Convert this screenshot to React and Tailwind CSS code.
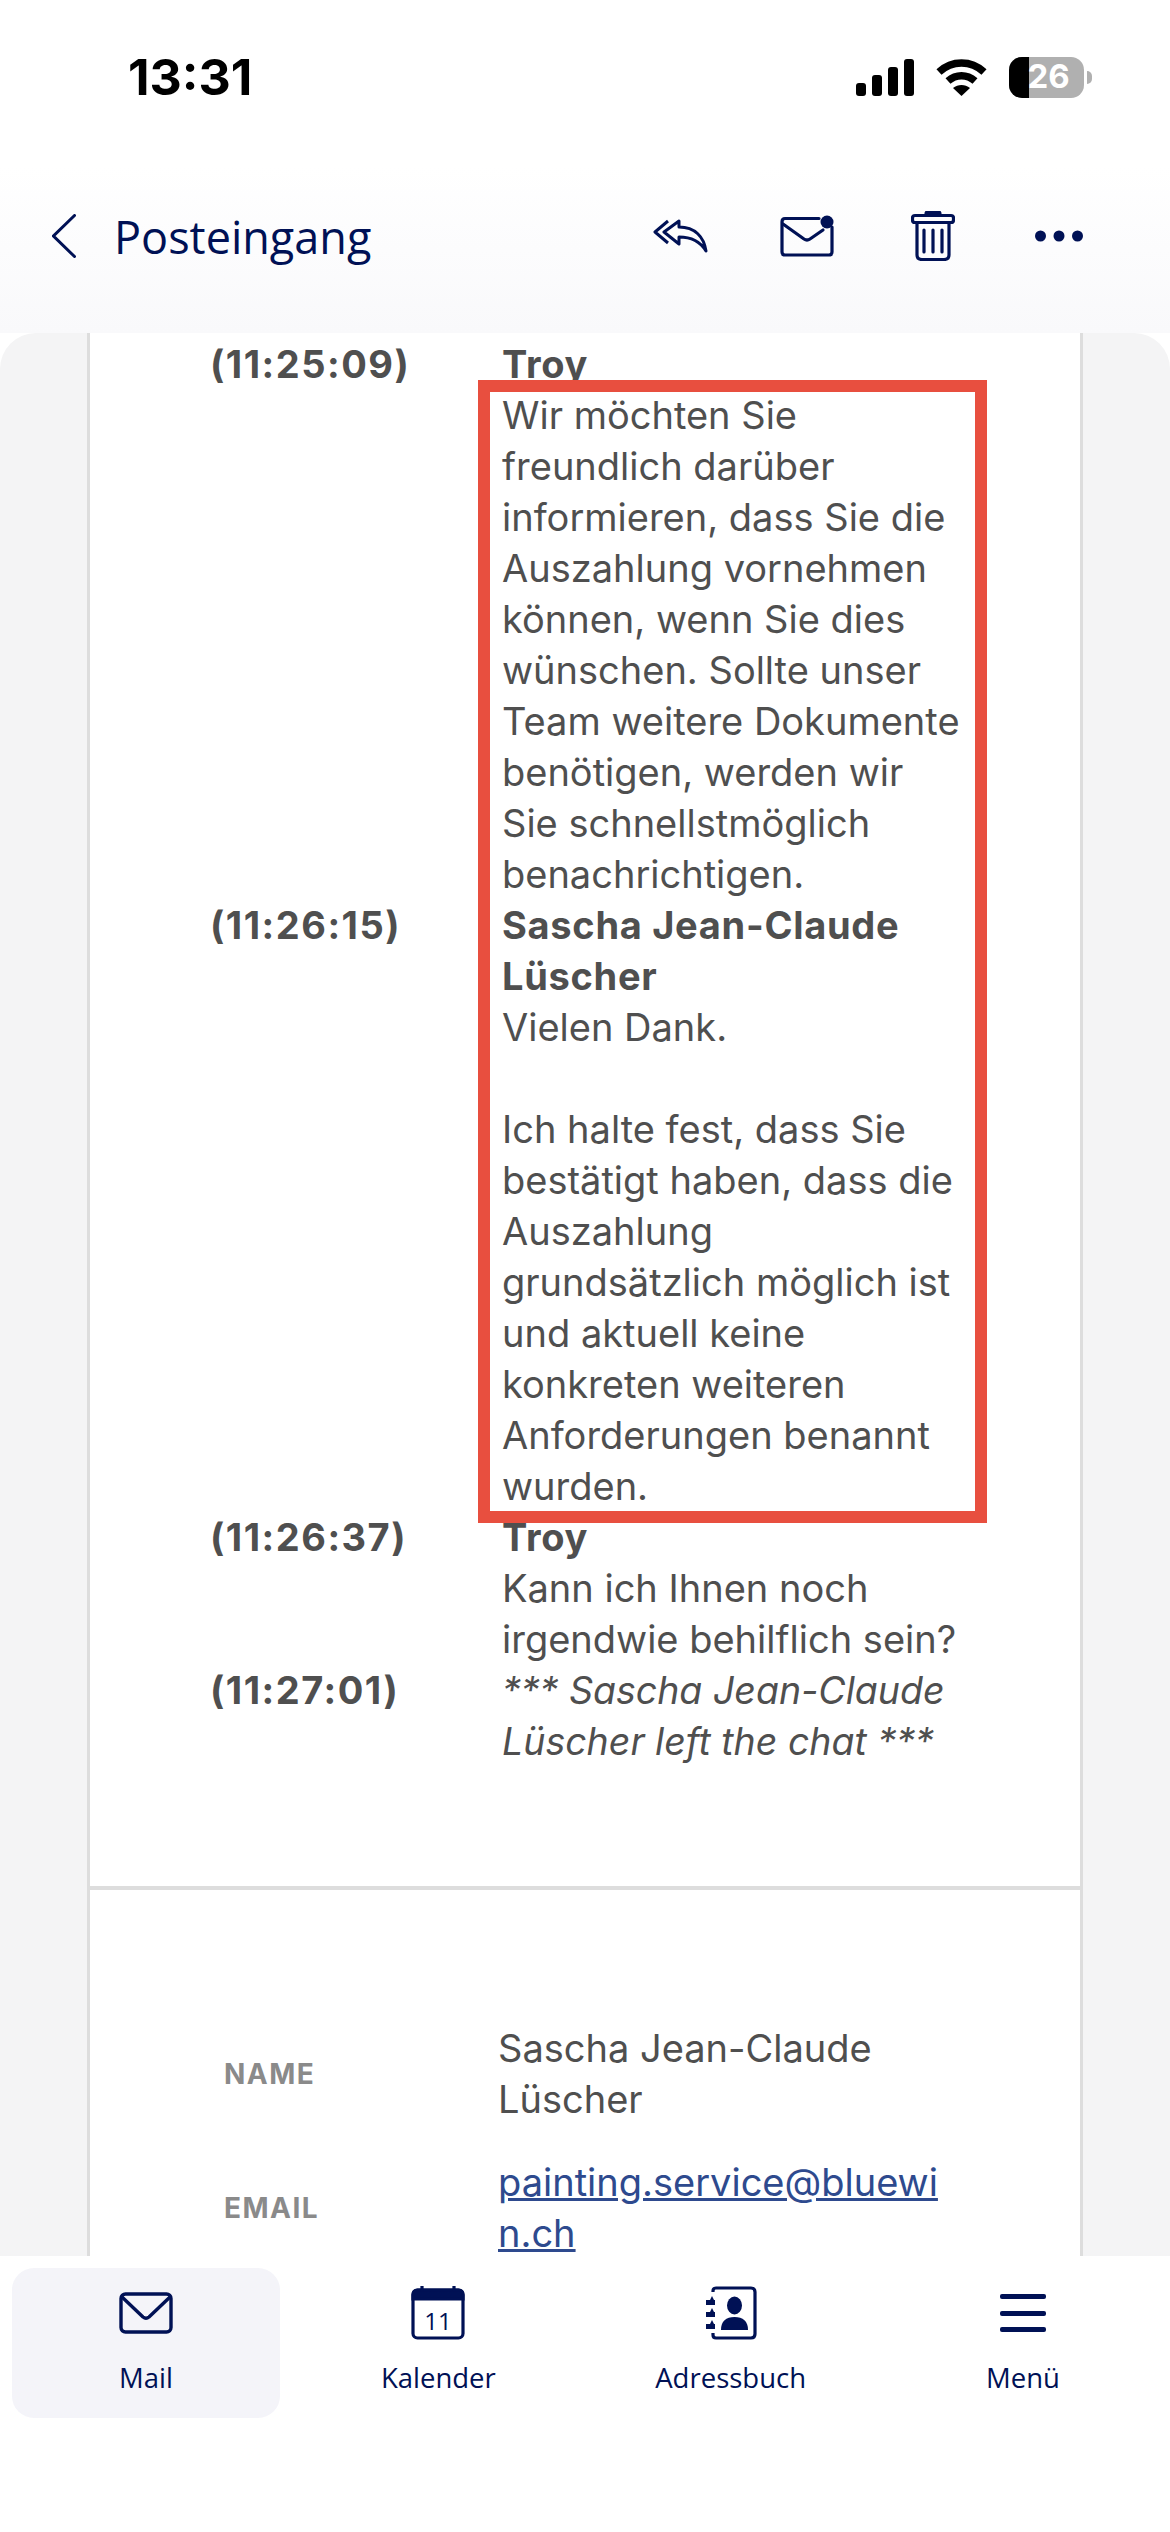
const NAVY = "#001155";

const rows = [
  { time: "(11:25:09)", name: ["Troy"], lines: ["Wir möchten Sie", "freundlich darüber", "informieren, dass Sie die", "Auszahlung vornehmen", "können, wenn Sie dies", "wünschen. Sollte unser", "Team weitere Dokumente", "benötigen, werden wir", "Sie schnellstmöglich", "benachrichtigen."] },
  { time: "(11:26:15)", name: ["Sascha Jean-Claude", "Lüscher"], lines: ["Vielen Dank.", "\u00a0", "Ich halte fest, dass Sie", "bestätigt haben, dass die", "Auszahlung", "grundsätzlich möglich ist", "und aktuell keine", "konkreten weiteren", "Anforderungen benannt", "wurden."] },
  { time: "(11:26:37)", name: ["Troy"], lines: ["Kann ich Ihnen noch", "irgendwie behilflich sein?"] },
  { time: "(11:27:01)", name: [], lines: ["*** Sascha Jean-Claude", "Lüscher left the chat ***"], italic: true },
];

function Signal() {
  return (
    <svg width="58" height="37" viewBox="0 0 58 37" fill="#000">
      <rect x="0" y="24" width="10" height="13" rx="3" />
      <rect x="16" y="16" width="10" height="21" rx="3" />
      <rect x="32" y="8" width="10" height="29" rx="3" />
      <rect x="48" y="0" width="10" height="37" rx="3" />
    </svg>
  );
}

function Wifi() {
  return (
    <svg width="51" height="37" viewBox="0 0 51 37" fill="none" stroke="#000" strokeWidth="7.5">
      <path d="M3 13 C16 1 35 1 48 13" />
      <path d="M12 22 C20 15 31 15 39 22" />
      <path d="M25.5 37 L17 29 C22 25 29 25 34 29 Z" fill="#000" stroke="none" />
    </svg>
  );
}

function Battery() {
  return (
    <div className="flex items-center">
      <div className="relative h-[41px] w-[75px] overflow-hidden rounded-[13px] bg-[#b0b0b0]">
        <div className="h-full w-[20px] bg-black" />
        <span className="absolute inset-0 flex items-center justify-center pl-[4px] font-['Inter',sans-serif] text-[33px] font-bold text-white">26</span>
      </div>
      <div className="ml-[3px] h-[13px] w-[5px] rounded-r-full bg-[#b0b0b0]" />
    </div>
  );
}

function Back() {
  return (
    <svg width="24" height="44" viewBox="0 0 24 44" fill="none" stroke={NAVY} strokeWidth="3" strokeLinecap="round">
      <path d="M22.5 1.5 L1.5 22 L22.5 42.5" />
    </svg>
  );
}

function ReplyAll() {
  return (
    <svg width="55" height="34" viewBox="0 0 55 34" fill="none" stroke={NAVY} strokeWidth="3" strokeLinejoin="round">
      <path d="M15 2 L2 13 L15 24" />
      <path d="M26 2 L11 13 L26 25 L26 18 C38 18 47 22 53 32 C51 18 42 8 26 8 Z" />
    </svg>
  );
}

function MailDot() {
  return (
    <svg width="54" height="42" viewBox="0 0 54 42" fill="none" stroke={NAVY} strokeWidth="3.2" strokeLinejoin="round" strokeLinecap="round">
      <path d="M39 3.5 H5 Q2 3.5 2 7 V37 Q2 40 5 40 H49 Q52 40 52 37 V12" />
      <path d="M3 9 L24 24 Q27 26 30 24 L43 15" />
      <circle cx="47" cy="7" r="6.5" fill={NAVY} stroke="none" />
    </svg>
  );
}

function Trash() {
  return (
    <svg width="44" height="50" viewBox="0 0 44 50" fill="none" stroke={NAVY} strokeWidth="3.2" strokeLinejoin="round" strokeLinecap="round">
      <path d="M15 3 Q15 0.5 18 0.5 H26 Q29 0.5 29 3 Z" fill={NAVY} />
      <rect x="1.5" y="4.5" width="41" height="7" rx="2.5" />
      <path d="M6 12 V44 Q6 48.5 11 48.5 H33 Q38 48.5 38 44 V12" />
      <path d="M13 19 V41 M22 19 V41 M31 19 V41" />
    </svg>
  );
}

function Dots() {
  return (
    <svg width="48" height="12" viewBox="0 0 48 12" fill={NAVY}>
      <circle cx="5.5" cy="6" r="5.5" />
      <circle cx="24" cy="6" r="5.5" />
      <circle cx="42.5" cy="6" r="5.5" />
    </svg>
  );
}

function NavMail() {
  return (
    <svg width="54" height="42" viewBox="0 0 54 42" fill="none" stroke={NAVY} strokeWidth="3.4" strokeLinejoin="round" strokeLinecap="round">
      <rect x="2" y="2" width="50" height="38" rx="4.5" />
      <path d="M3 5 L24 25 Q27 27.5 30 25 L51 5" />
    </svg>
  );
}

function NavCal() {
  return (
    <svg width="54" height="54" viewBox="0 0 54 54" fill="none" stroke={NAVY} strokeWidth="3.2">
      <rect x="2" y="4" width="50" height="48" rx="4.5" />
      <path d="M2 9 Q2 4 6.5 4 H47.5 Q52 4 52 9 V13 H2 Z" fill={NAVY} />
      <path d="M11 0 V5 M43 0 V5" />
      <text x="27" y="44" textAnchor="middle" fontSize="24" fill={NAVY} stroke="none" fontFamily="'Open Sans', sans-serif">11</text>
    </svg>
  );
}

function NavBook() {
  return (
    <svg width="52" height="54" viewBox="0 0 52 54" fill={NAVY}>
      <path d="M8 6 V5 Q8 2 11 2 H46 Q50 2 50 6 V48 Q50 52 46 52 H11 Q8 52 8 49 V47" fill="none" stroke={NAVY} strokeWidth="3.2" />
      <path d="M5 14 L7 10 L9 14 H10 V19 H1 V14 Z" />
      <path d="M5 26 L7 22 L9 26 H10 V31 H1 V26 Z" />
      <path d="M5 38 L7 34 L9 38 H10 V43 H1 V38 Z" />
      <ellipse cx="29.5" cy="19.5" rx="7.5" ry="9" />
      <path d="M16 44 C16 35 21 31 29.5 31 C38 31 43 35 43 44 Z" />
    </svg>
  );
}

function NavMenu() {
  return (
    <svg width="46" height="38" viewBox="0 0 46 38" fill={NAVY}>
      <rect x="0" y="0" width="46" height="5" rx="2" />
      <rect x="0" y="17" width="46" height="5" rx="2" />
      <rect x="0" y="33" width="46" height="5" rx="2" />
    </svg>
  );
}

function NavItem({ icon, label, active }) {
  return (
    <div className={`flex h-[150px] w-[268px] flex-col items-center rounded-[22px] ${active ? "bg-[#f4f4f9]" : ""}`}>
      <div className="flex h-[90px] items-center">{icon}</div>
      <span className="mt-[2px] font-['Open_Sans',sans-serif] text-[27.5px] leading-[36px] text-[#001155]">{label}</span>
    </div>
  );
}

export default function App() {
  return (
    <div className="flex h-[2532px] w-[1170px] flex-col overflow-hidden bg-white">
      <header className="h-[333px] shrink-0 bg-gradient-to-b from-white from-[50%] to-[#f9f9fb]">
        <div className="flex h-[154px] items-center justify-between pl-[128px] pr-[78px]">
          <span className="font-['Inter',sans-serif] text-[50px] font-bold leading-none text-black">13:31</span>
          <div className="flex items-center gap-[22px]">
            <Signal />
            <Wifi />
            <Battery />
          </div>
        </div>
        <div className="mt-[57px] flex h-[50px] items-center pl-[52px] pr-[87px]">
          <Back />
          <span className="ml-[38px] font-['Open_Sans',sans-serif] text-[45px] leading-none text-[#001155]">Posteingang</span>
          <div className="ml-auto flex items-center">
            <ReplyAll />
            <div className="ml-[72px]"><MailDot /></div>
            <div className="ml-[77px]"><Trash /></div>
            <div className="ml-[80px]"><Dots /></div>
          </div>
        </div>
      </header>

      <main className="relative h-[1923px] shrink-0 overflow-hidden rounded-t-[36px] bg-[#f4f4f5]">
        <div className="mx-[87px] h-full border-x-[3px] border-[#dddddd] bg-white font-['Inter',sans-serif] text-[38px] leading-[51px] text-[#4f4f4f]">
          <div className="h-[1557px] border-b-[4px] border-[#dddddd] pl-[120px] pt-[6px]">
            {rows.map((r) => (
              <div key={r.time} className="flex whitespace-nowrap">
                <div className="w-[292px] shrink-0 font-bold tracking-[1.5px]">{r.time}</div>
                <div className={r.italic ? "text-[37.5px] italic" : ""}>
                  {r.name.map((n) => <div key={n} className="font-bold tracking-[0.7px]">{n}</div>)}
                  {r.lines.map((l, i) => <div key={i}>{l}</div>)}
                </div>
              </div>
            ))}
          </div>
          <div className="whitespace-nowrap pl-[134px] pt-[133px]">
            <div className="flex items-center">
              <div className="w-[274px] shrink-0 text-[28px] font-bold tracking-[1.5px] text-[#8a8a8a]">NAME</div>
              <div>Sascha Jean-Claude<br />Lüscher</div>
            </div>
            <div className="mt-[32px] flex items-center">
              <div className="w-[274px] shrink-0 text-[28px] font-bold tracking-[1.5px] text-[#8a8a8a]">EMAIL</div>
              <div className="text-[#2e4a8e] underline">painting.service@bluewi<br />n.ch</div>
            </div>
          </div>
        </div>
        <div className="absolute left-[478px] top-[47px] h-[1143px] w-[509px] border-[12px] border-[#e84f3f]" />
      </main>

      <nav className="flex flex-1 justify-between bg-white pl-[12px] pr-[13px] pt-[12px]">
        <NavItem active icon={<NavMail />} label="Mail" />
        <NavItem icon={<NavCal />} label="Kalender" />
        <NavItem icon={<NavBook />} label="Adressbuch" />
        <NavItem icon={<NavMenu />} label="Menü" />
      </nav>
    </div>
  );
}
